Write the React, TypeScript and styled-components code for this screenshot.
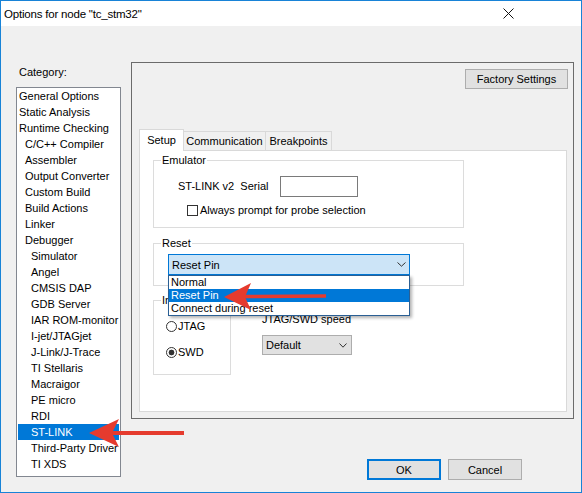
import React from 'react';
import styled, { createGlobalStyle } from 'styled-components';

const GlobalStyle = createGlobalStyle`
  html, body {
    margin: 0;
    padding: 0;
    background: #ffffff;
  }
  body {
    font-family: "Liberation Sans", Arial, sans-serif;
    font-size: 11px;
    color: #000;
  }
`;

const Window = styled.div`
  position: relative;
  width: 582px;
  height: 493px;
  box-sizing: border-box;
  border: 1px solid #1883d7;
  background: #f0f0f0;
  display: flex;
  flex-direction: column;
  overflow: hidden;
`;

const TitleBar = styled.div`
  height: 25px;
  flex: none;
  background: #ffffff;
  display: flex;
  align-items: center;
  padding-left: 3px;
`;

const TitleText = styled.div`
  flex: 1;
  font-size: 11.5px;
  letter-spacing: -0.2px;
`;

const CloseButton = styled.div`
  width: 46px;
  height: 25px;
  margin-right: 50px;
  display: flex;
  align-items: center;
  justify-content: center;
`;

const Body = styled.div`
  flex: 1;
  display: grid;
  grid-template-columns: 105px 443px;
  grid-template-rows: 357px auto;
  column-gap: 10px;
  padding: 36px 0 0 15px;
`;

const CategoryColumn = styled.div`
  grid-row: 1 / span 2;
  padding-top: 4px;
`;

const CategoryLabel = styled.div`
  line-height: 13px;
  padding-left: 3px;
`;

const CategoryList = styled.div`
  margin-top: 8px;
  height: 390px;
  box-sizing: border-box;
  border: 1px solid #828790;
  background: #ffffff;
  padding: 0 1px;
`;

const CategoryItem = styled.div<{ $level: number; $selected?: boolean }>`
  height: 16px;
  line-height: 16px;
  padding-left: ${p => 1 + p.$level * 6}px;
  white-space: nowrap;
  background: ${p => (p.$selected ? '#0078d7' : 'transparent')};
  color: ${p => (p.$selected ? '#ffffff' : '#000000')};
`;

const Panel = styled.div`
  box-sizing: border-box;
  border: 1px solid #6b6b6b;
  display: flex;
  flex-direction: column;
  padding: 6px 5px 6px 7px;
`;

const FactoryRow = styled.div`
  display: flex;
  justify-content: flex-end;
`;

const Button = styled.button<{ $width: number; $height: number; $default?: boolean }>`
  box-sizing: border-box;
  width: ${p => p.$width}px;
  height: ${p => p.$height}px;
  padding: 0;
  margin: 0;
  font-family: inherit;
  font-size: 11px;
  color: #000;
  background: #e1e1e1;
  border: ${p => (p.$default ? '2px solid #0078d7' : '1px solid #adadad')};
  border-radius: 0;
  outline: none;
`;

const TabStrip = styled.div`
  margin-top: 40px;
  display: flex;
  align-items: flex-end;
  position: relative;
  z-index: 1;
`;

const Tab = styled.div<{ $width: number; $active?: boolean }>`
  box-sizing: border-box;
  width: ${p => p.$width}px;
  height: ${p => (p.$active ? 22 : 20)}px;
  margin-bottom: -1px;
  border: 1px solid #d9d9d9;
  border-bottom: ${p => (p.$active ? 'none' : '1px solid #d9d9d9')};
  background: ${p => (p.$active ? '#ffffff' : '#f0f0f0')};
  position: relative;
  z-index: ${p => (p.$active ? 2 : 1)};
  display: flex;
  align-items: center;
  justify-content: center;
  padding-bottom: ${p => (p.$active ? 1 : 0)}px;

  & + & {
    margin-left: -1px;
  }
`;

const TabBody = styled.div`
  flex: 1;
  margin-right: 1px;
  border: 1px solid #d9d9d9;
  background: #ffffff;
  padding: 2px 0 0 13px;
`;

const Group = styled.fieldset<{ $width: number; $gap?: number }>`
  box-sizing: border-box;
  width: ${p => p.$width}px;
  min-width: 0;
  margin: ${p => p.$gap ?? 0}px 0 0 0;
  padding: 0;
  border: 1px solid #dcdcdc;
`;

const GroupLegend = styled.legend`
  margin-left: 7px;
  padding: 0 1px;
  line-height: 14px;
  font-size: 11px;
`;

const GroupBody = styled.div<{ $pad: string }>`
  padding: ${p => p.$pad};
`;

const SerialRow = styled.div`
  display: flex;
  align-items: center;
  height: 21px;
`;

const FieldLabel = styled.span<{ $width?: number }>`
  white-space: pre;
  ${p => (p.$width ? `width: ${p.$width}px;` : '')}
  line-height: 13px;
`;

const TextBox = styled.div`
  box-sizing: border-box;
  width: 78px;
  height: 21px;
  border: 1px solid #7a7a7a;
  background: #ffffff;
`;

const CheckRow = styled.div`
  display: flex;
  align-items: center;
  height: 13px;
  margin-top: 7px;
  padding-left: 9px;
`;

const CheckBox = styled.span`
  box-sizing: border-box;
  width: 11px;
  height: 11px;
  border: 1px solid #333333;
  background: #ffffff;
  margin-right: 2px;
`;

const Combo = styled.div`
  position: relative;
  box-sizing: border-box;
  margin-left: 14px;
  width: 242px;
  height: 21px;
  border: 1px solid #0078d7;
  background: #cce4f7;
  display: flex;
  align-items: center;
  justify-content: space-between;
  padding: 0 3px 0 3px;
`;

const Select = styled.div`
  box-sizing: border-box;
  width: 90px;
  height: 20px;
  margin-top: 9px;
  border: 1px solid #adadad;
  background: #e1e1e1;
  display: flex;
  align-items: center;
  justify-content: space-between;
  padding: 0 4px 0 3px;
`;

const DropList = styled.div`
  position: absolute;
  top: calc(100% + 1px);
  left: -1px;
  width: 242px;
  box-sizing: border-box;
  border: 1px solid #2a5f94;
  background: #ffffff;
  box-shadow: 2px 2px 3px rgba(0, 0, 0, 0.3);
  z-index: 10;
`;

const DropItem = styled.div<{ $selected?: boolean }>`
  height: 13px;
  line-height: 13px;
  padding-left: 2px;
  white-space: nowrap;
  background: ${p => (p.$selected ? '#0078d7' : 'transparent')};
  color: ${p => (p.$selected ? '#ffffff' : '#000000')};
`;

const InterfaceRow = styled.div`
  display: flex;
  align-items: flex-start;
  margin-top: 7px;
`;

const RadioRow = styled.div`
  display: flex;
  align-items: center;
  height: 13px;

  & + & {
    margin-top: 13px;
  }
`;

const Radio = styled.span<{ $checked?: boolean }>`
  box-sizing: border-box;
  width: 11px;
  height: 11px;
  border-radius: 50%;
  border: 1px solid #333333;
  background: ${p =>
    p.$checked ? 'radial-gradient(circle, #333 0 2.6px, #fff 3.2px)' : '#ffffff'};
  margin-right: 1px;
`;

const SpeedColumn = styled.div`
  margin-left: 31px;
  padding-top: 20px;
  display: flex;
  flex-direction: column;
`;

const ButtonRow = styled.div`
  grid-column: 2;
  margin-top: 40px;
  display: flex;
  justify-content: flex-end;
  gap: 7px;
  padding-right: 52px;
  align-items: flex-start;
`;

const Overlay = styled.svg`
  position: absolute;
  left: 0;
  top: 0;
  pointer-events: none;
  z-index: 20;
`;

const Chevron = ({ w = 8 }: { w?: number }) => (
  <svg width={w + 1} height={5} viewBox={`0 0 ${w + 1} 5`}>
    <polyline
      points={`0.5,0.5 ${(w + 1) / 2},4.2 ${w + 0.5},0.5`}
      fill="none"
      stroke="#333"
      strokeWidth="1"
    />
  </svg>
);

const categories: { name: string; level: number }[] = [
  { name: 'General Options', level: 0 },
  { name: 'Static Analysis', level: 0 },
  { name: 'Runtime Checking', level: 0 },
  { name: 'C/C++ Compiler', level: 1 },
  { name: 'Assembler', level: 1 },
  { name: 'Output Converter', level: 1 },
  { name: 'Custom Build', level: 1 },
  { name: 'Build Actions', level: 1 },
  { name: 'Linker', level: 1 },
  { name: 'Debugger', level: 1 },
  { name: 'Simulator', level: 2 },
  { name: 'Angel', level: 2 },
  { name: 'CMSIS DAP', level: 2 },
  { name: 'GDB Server', level: 2 },
  { name: 'IAR ROM-monitor', level: 2 },
  { name: 'I-jet/JTAGjet', level: 2 },
  { name: 'J-Link/J-Trace', level: 2 },
  { name: 'TI Stellaris', level: 2 },
  { name: 'Macraigor', level: 2 },
  { name: 'PE micro', level: 2 },
  { name: 'RDI', level: 2 },
  { name: 'ST-LINK', level: 2 },
  { name: 'Third-Party Driver', level: 2 },
  { name: 'TI XDS', level: 2 },
];

const resetOptions = ['Normal', 'Reset Pin', 'Connect during reset'];

const ARROW = '#e53b2e';

export default function App() {
  return (
    <>
      <GlobalStyle />
      <Window>
        <TitleBar>
          <TitleText>Options for node "tc_stm32"</TitleText>
          <CloseButton>
            <svg width="11" height="11" viewBox="0 0 11 11">
              <path d="M0.5 0.5 L10.5 10.5 M10.5 0.5 L0.5 10.5" stroke="#111" strokeWidth="1" />
            </svg>
          </CloseButton>
        </TitleBar>

        <Body>
          <CategoryColumn>
            <CategoryLabel>Category:</CategoryLabel>
            <CategoryList>
              {categories.map(c => (
                <CategoryItem key={c.name} $level={c.level} $selected={c.name === 'ST-LINK'}>
                  {c.name}
                </CategoryItem>
              ))}
            </CategoryList>
          </CategoryColumn>

          <Panel>
            <FactoryRow>
              <Button $width={103} $height={20}>Factory Settings</Button>
            </FactoryRow>

            <TabStrip>
              <Tab $width={45} $active>Setup</Tab>
              <Tab $width={83}>Communication</Tab>
              <Tab $width={67}>Breakpoints</Tab>
            </TabStrip>

            <TabBody>
              <Group $width={311}>
                <GroupLegend>Emulator</GroupLegend>
                <GroupBody $pad="9px 0 10px 24px">
                  <SerialRow>
                    <FieldLabel $width={102}>{'ST-LINK v2  Serial'}</FieldLabel>
                    <TextBox />
                  </SerialRow>
                  <CheckRow>
                    <CheckBox />
                    <FieldLabel>Always prompt for probe selection</FieldLabel>
                  </CheckRow>
                </GroupBody>
              </Group>

              <Group $width={311} $gap={8}>
                <GroupLegend>Reset</GroupLegend>
                <GroupBody $pad="4px 0 10px 0">
                  <Combo>
                    <span>Reset Pin</span>
                    <Chevron />
                    <DropList>
                      {resetOptions.map(o => (
                        <DropItem key={o} $selected={o === 'Reset Pin'}>
                          {o}
                        </DropItem>
                      ))}
                    </DropList>
                  </Combo>
                </GroupBody>
              </Group>

              <InterfaceRow>
                <Group $width={78}>
                  <GroupLegend>Interface</GroupLegend>
                  <GroupBody $pad="13px 0 15px 12px">
                    <RadioRow>
                      <Radio />
                      <FieldLabel>JTAG</FieldLabel>
                    </RadioRow>
                    <RadioRow>
                      <Radio $checked />
                      <FieldLabel>SWD</FieldLabel>
                    </RadioRow>
                  </GroupBody>
                </Group>
                <SpeedColumn>
                  <FieldLabel>JTAG/SWD speed</FieldLabel>
                  <Select>
                    <span>Default</span>
                    <Chevron w={7} />
                  </Select>
                </SpeedColumn>
              </InterfaceRow>
            </TabBody>
          </Panel>

          <ButtonRow>
            <Button $width={74} $height={21} $default>OK</Button>
            <Button $width={74} $height={21}>Cancel</Button>
          </ButtonRow>
        </Body>

        <Overlay width="582" height="493" viewBox="0 0 582 493">
          <line x1="106" y1="432" x2="183" y2="432" stroke={ARROW} strokeWidth="4" />
          <path d="M88 432 L118 418 L111 432 L118 446 Z" fill={ARROW} />
          <line x1="240" y1="295.5" x2="325" y2="295" stroke={ARROW} strokeWidth="3.5" />
          <path d="M223 296 L250 282 L244 296 L250 309 Z" fill={ARROW} />
        </Overlay>
      </Window>
    </>
  );
}
